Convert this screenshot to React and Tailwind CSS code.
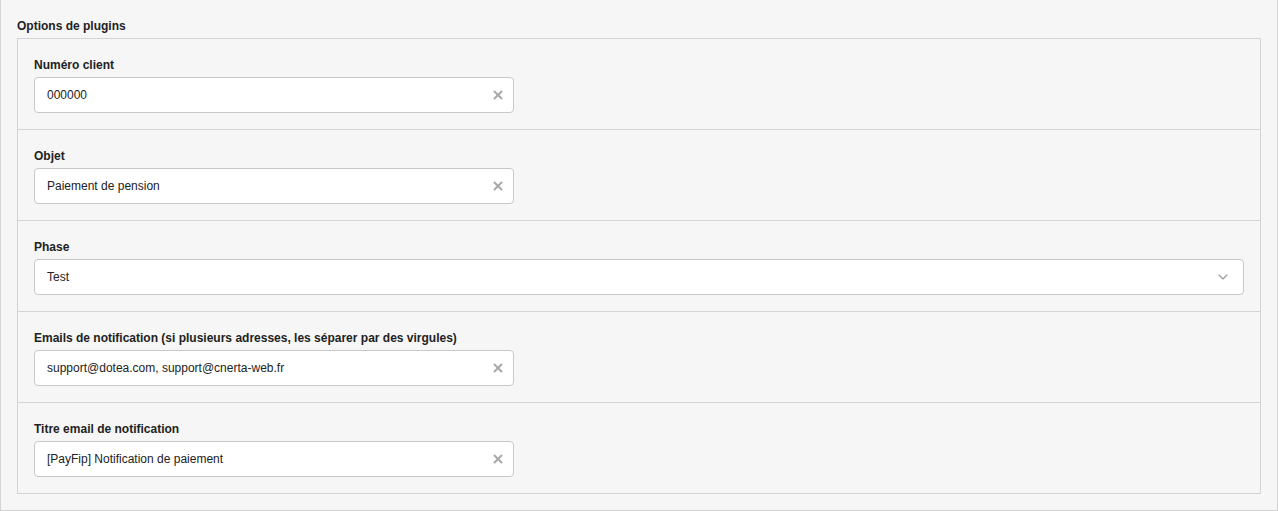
import React from 'react';
import { X, ChevronDown } from 'lucide-react';

const fields = [
  { label: 'Numéro client', value: '000000' },
  { label: 'Objet', value: 'Paiement de pension' },
  { label: 'Phase', value: 'Test', select: true },
  { label: 'Emails de notification (si plusieurs adresses, les séparer par des virgules)', value: 'support@dotea.com, support@cnerta-web.fr' },
  { label: 'Titre email de notification', value: '[PayFip] Notification de paiement' },
];

export default function App() {
  return (
    <div className="w-[1278px] h-[511px] bg-[#f6f6f6] font-['Liberation_Sans',Arial,sans-serif] text-[#222]">
      <div className="border-l border-r border-b border-[#d4d4d4] px-4 pt-[18px] pb-4">
        <h2 className="text-xs leading-4 font-bold mb-1">Options de plugins</h2>
        <div className="border border-[#d4d4d4]">
          {fields.map((f, i) => (
            <div key={f.label} className={`px-4 pt-[18px] pb-4 ${i < fields.length - 1 ? 'border-b border-[#d4d4d4]' : ''}`}>
              <label className="block text-xs leading-4 font-bold mb-1">{f.label}</label>
              <div className={`h-9 bg-white border border-[#c8c8c8] rounded flex items-center pl-3 ${f.select ? 'w-full pr-3' : 'w-[480px] pr-2'}`}>
                <span className="flex-1 text-xs">{f.value}</span>
                {f.select ? (
                  <ChevronDown className="w-4 h-4 text-[#999]" strokeWidth={1.75} />
                ) : (
                  <X className="w-3.5 h-3.5 text-[#aaa]" strokeWidth={3.5} />
                )}
              </div>
            </div>
          ))}
        </div>
      </div>
    </div>
  );
}
